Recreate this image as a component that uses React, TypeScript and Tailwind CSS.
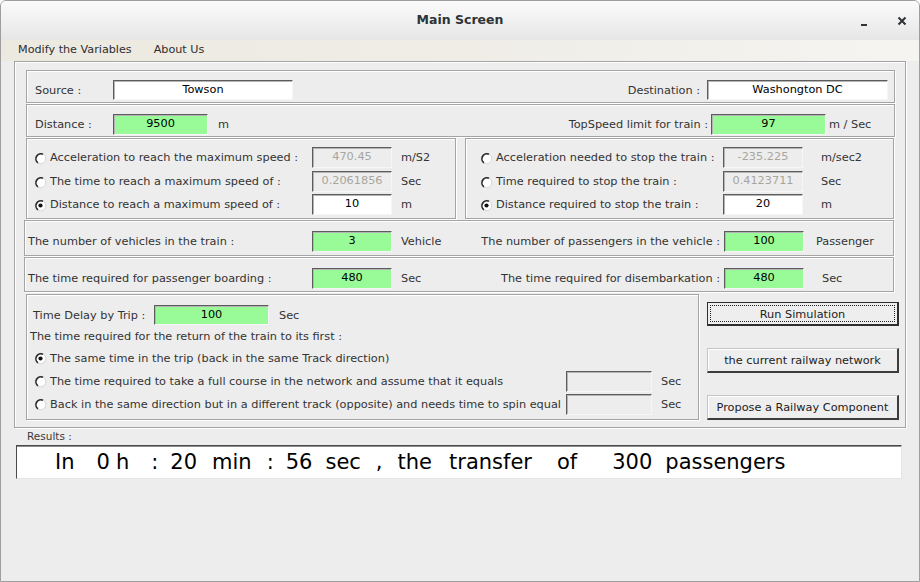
import React from "react";

// shared looks
const etched = "border border-[#a4a4a4] shadow-[inset_1px_1px_0_#ffffff,1px_1px_0_#ffffff]";
const lbl = "text-[11.3px] text-[#333333] whitespace-nowrap translate-y-[1px]";

function Field({
  value = "",
  w,
  h = "h-[21px]",
  kind = "white",
}: {
  value?: string;
  w: string;
  h?: string;
  kind?: "white" | "green" | "dim" | "empty";
}) {
  const look =
    kind === "green"
      ? "bg-[#98fb98] text-black"
      : kind === "dim"
      ? "bg-[#ededed] text-[#a8a59d]"
      : kind === "empty"
      ? "bg-[#ededed]"
      : "bg-white text-black";
  return (
    <div
      className={`${w} ${h} ${look} shrink-0 flex items-center justify-center text-[11.3px] border border-t-[#5c5c5c] border-l-[#5c5c5c] border-r-[#f6f6f6] border-b-[#f6f6f6] shadow-[inset_1px_1px_0_#b4b4b4]`}
    >
      {value}
    </div>
  );
}

function Radio({ checked }: { checked?: boolean }) {
  return (
    <svg width="13" height="13" viewBox="0 0 13 13" className="shrink-0">
      <circle cx="6.5" cy="6.5" r="5.3" fill="#ffffff" stroke="#d4d4d4" strokeWidth="1" />
      <path d="M9 2.2 A5 5 0 0 0 4 10.8" fill="none" stroke="#2a2a2a" strokeWidth="1.6" />
      {checked && <circle cx="6.5" cy="6.5" r="2.1" fill="#111111" />}
    </svg>
  );
}

function Button({ text, primary, h }: { text: string; primary?: boolean; h: string }) {
  if (primary) {
    return (
      <div className={`${h} w-[192px] p-[2px] border border-[#2e2e2e] border-r-2 border-b-2 bg-[#eeeeee]`}>
        <div className="h-full w-full border border-dotted border-[#222222] flex items-center justify-center pt-[3px] text-[11.3px] text-[#222222]">
          {text}
        </div>
      </div>
    );
  }
  return (
    <div
      className={`${h} w-[192px] flex items-center justify-center pt-[3px] bg-[#eeeeee] border border-t-[#c4c4c4] border-l-[#c4c4c4] border-r-2 border-b-2 border-r-[#3c3c3c] border-b-[#3c3c3c] shadow-[inset_1px_1px_0_#ffffff] text-[11.3px] text-[#222222]`}
    >
      {text}
    </div>
  );
}

function RadioRow({
  text,
  checked,
  col,
  value,
  unit,
  kind,
  unitGap,
}: {
  text: string;
  checked?: boolean;
  col: string;
  value: string;
  unit: string;
  kind: "white" | "dim";
  unitGap: string;
}) {
  return (
    <div className="flex items-center h-[21px]">
      <div className={`${col} flex items-center gap-[3px]`}>
        <div className="translate-y-[1px]">
          <Radio checked={checked} />
        </div>
        <span className={lbl}>{text}</span>
      </div>
      <Field w="w-[80px]" value={value} kind={kind} />
      <span className={`${lbl} ${unitGap}`}>{unit}</span>
    </div>
  );
}

const words: [string, string][] = [
  ["In", "ml-[38px]"],
  ["0", "ml-[22px]"],
  ["h", "ml-[6px]"],
  [":", "ml-[22px]"],
  ["20", "ml-[12px]"],
  ["min", "ml-[15px]"],
  [":", "ml-[15px]"],
  ["56", "ml-[12px]"],
  ["sec", "ml-[13px]"],
  [",", "ml-[15px]"],
  ["the", "ml-[15px]"],
  ["transfer", "ml-[17px]"],
  ["of", "ml-[25px]"],
  ["300", "ml-[35px]"],
  ["passengers", "ml-[13px]"],
];

export default function App() {
  return (
    <div className="w-[920px] h-[582px] flex flex-col bg-[#ededed] border border-[#9e9e9e] rounded-t-[6px] overflow-hidden font-['DejaVu_Sans',sans-serif]">
      {/* title bar */}
      <div className="h-[39px] shrink-0 grid grid-cols-[1fr_auto_1fr] items-center bg-gradient-to-b from-[#fbfbfb] to-[#e6e6e6]">
        <div />
        <div className="text-[12.5px] font-bold text-[#2e3436]">Main Screen</div>
        <div className="flex items-center justify-end pr-[12px] gap-[28px]">
          <svg width="10" height="10" viewBox="0 0 10 10" className="mt-[3px]">
            <rect x="2" y="7" width="6" height="2" fill="#2e3436" />
          </svg>
          <svg width="10" height="10" viewBox="0 0 10 10">
            <path d="M1.5 1.5 L8.5 8.5 M8.5 1.5 L1.5 8.5" stroke="#2e3436" strokeWidth="2" />
          </svg>
        </div>
      </div>

      {/* menu bar */}
      <div className="h-[21px] shrink-0 flex items-center pl-[6px] bg-gradient-to-r from-[#ece9e0] via-[#efede6] to-[#f5f4f1]">
        <span className="px-[11px] text-[11.2px] text-[#2e2e2e]">Modify the Variables</span>
        <span className="px-[11px] text-[11.2px] text-[#2e2e2e]">About Us</span>
      </div>

      {/* main panel */}
      <div className={`ml-[13px] w-[892px] h-[367px] shrink-0 ${etched} pt-[8px] pl-[11px] pr-[10px] pb-[7px] flex flex-col`}>
        {/* source / destination */}
        <div className={`h-[33px] shrink-0 ${etched} flex items-start pt-[9px] pl-[8px] pr-[6px]`}>
          <div className="flex items-center h-[20px]">
            <span className={`${lbl} w-[78px]`}>Source :</span>
            <Field w="w-[180px]" h="h-[20px]" value="Towson" />
          </div>
          <div className="flex-1" />
          <div className="flex items-center h-[20px]">
            <span className={lbl}>Destination :</span>
            <div className="ml-[7px]">
              <Field w="w-[181px]" h="h-[20px]" value="Washongton DC" />
            </div>
          </div>
        </div>

        {/* distance / top speed */}
        <div className={`mt-[1px] h-[33px] shrink-0 ${etched} flex items-start pt-[9px] pl-[8px] pr-[16px]`}>
          <div className="flex items-center h-[21px]">
            <span className={`${lbl} w-[78px]`}>Distance :</span>
            <Field w="w-[95px]" value="9500" kind="green" />
            <span className={`${lbl} ml-[10px]`}>m</span>
          </div>
          <div className="flex-1" />
          <div className="flex items-center h-[21px]">
            <span className={lbl}>TopSpeed limit for train :</span>
            <div className="ml-[3px]">
              <Field w="w-[115px]" value="97" kind="green" />
            </div>
            <span className={`${lbl} ml-[3px] w-[49px]`}>m / Sec</span>
          </div>
        </div>

        {/* acceleration / deceleration */}
        <div className="mt-[1px] h-[81px] shrink-0 flex">
          <div className={`w-[430px] ${etched} flex flex-col pl-[7px]`}>
            <div className="mt-[8px]">
              <RadioRow text="Acceleration to reach the maximum speed :" col="w-[278px]" value="470.45" unit="m/S2" kind="dim" unitGap="ml-[9px]" />
            </div>
            <div className="mt-[3px]">
              <RadioRow text="The time to reach a maximum speed of :" col="w-[278px]" value="0.2061856" unit="Sec" kind="dim" unitGap="ml-[9px]" />
            </div>
            <div className="mt-[2px]">
              <RadioRow text="Distance to reach a maximum speed of :" checked col="w-[278px]" value="10" unit="m" kind="white" unitGap="ml-[9px]" />
            </div>
          </div>
          <div className={`ml-[9px] w-[429px] ${etched} flex flex-col pl-[14px]`}>
            <div className="mt-[8px]">
              <RadioRow text="Acceleration needed to stop the train :" col="w-[243px]" value="-235.225" unit="m/sec2" kind="dim" unitGap="ml-[18px]" />
            </div>
            <div className="mt-[3px]">
              <RadioRow text="Time required to stop the train :" col="w-[243px]" value="0.4123711" unit="Sec" kind="dim" unitGap="ml-[18px]" />
            </div>
            <div className="mt-[2px]">
              <RadioRow text="Distance required to stop the train :" checked col="w-[243px]" value="20" unit="m" kind="white" unitGap="ml-[18px]" />
            </div>
          </div>
        </div>

        {/* vehicles / passengers */}
        <div className={`mt-[1px] -ml-[2px] w-[870px] h-[36px] shrink-0 ${etched} flex items-start pt-[10px] pl-[3px]`}>
          <div className="flex items-center h-[21px]">
            <span className={`${lbl} w-[284px]`}>The number of vehicles in the train :</span>
            <Field w="w-[80px]" value="3" kind="green" />
            <span className={`${lbl} ml-[9px]`}>Vehicle</span>
          </div>
          <div className="flex-1" />
          <div className="flex items-center h-[21px]">
            <span className={lbl}>The number of passengers in the vehicle :</span>
            <div className="ml-[4px]">
              <Field w="w-[80px]" value="100" kind="green" />
            </div>
            <span className={`${lbl} ml-[12px] w-[77px]`}>Passenger</span>
          </div>
        </div>

        {/* boarding / disembarkation */}
        <div className={`mt-[1px] -ml-[2px] w-[870px] h-[35px] shrink-0 ${etched} flex items-start pt-[10px] pl-[3px]`}>
          <div className="flex items-center h-[21px]">
            <span className={`${lbl} w-[284px]`}>The time required for passenger boarding :</span>
            <Field w="w-[80px]" value="480" kind="green" />
            <span className={`${lbl} ml-[9px]`}>Sec</span>
          </div>
          <div className="flex-1" />
          <div className="flex items-center h-[21px]">
            <span className={lbl}>The time required for disembarkation :</span>
            <div className="ml-[4px]">
              <Field w="w-[80px]" value="480" kind="green" />
            </div>
            <span className={`${lbl} ml-[18px] w-[71px]`}>Sec</span>
          </div>
        </div>

        {/* return options + buttons */}
        <div className="mt-[2px] w-[873px] h-[126px] shrink-0 flex">
          <div className={`w-[673px] ${etched} flex flex-col`}>
            <div className="mt-[10px] h-[20px] flex items-center pl-[6px]">
              <span className={`${lbl} w-[121px]`}>Time Delay by Trip :</span>
              <Field w="w-[115px]" h="h-[20px]" value="100" kind="green" />
              <span className={`${lbl} ml-[10px]`}>Sec</span>
            </div>
            <div className="h-[22px] flex items-center pl-[3px]">
              <span className={lbl}>The time required for the return of the train to its first :</span>
            </div>
            <div className="h-[23px] flex items-center pl-[7px] gap-[3px]">
              <Radio checked />
              <span className={lbl}>The same time in the trip (back in the same Track direction)</span>
            </div>
            <div className="h-[23px] flex items-center pl-[7px]">
              <div className="w-[532px] flex items-center gap-[3px]">
                <Radio />
                <span className={lbl}>The time required to take a full course in the network and assume that it equals</span>
              </div>
              <Field w="w-[86px]" kind="empty" />
              <span className={`${lbl} ml-[9px]`}>Sec</span>
            </div>
            <div className="h-[23px] flex items-center pl-[7px]">
              <div className="w-[532px] flex items-center gap-[3px] overflow-hidden">
                <Radio />
                <span className={lbl}>Back in the same direction but in a different track (opposite) and needs time to spin equal</span>
              </div>
              <Field w="w-[86px]" kind="empty" />
              <span className={`${lbl} ml-[9px]`}>Sec</span>
            </div>
          </div>
          <div className="ml-[8px] pt-[8px] flex flex-col">
            <Button text="Run Simulation" primary h="h-[24px]" />
            <div className="mt-[22px]">
              <Button text="the current railway network" h="h-[25px]" />
            </div>
            <div className="mt-[22px]">
              <Button text="Propose a Railway Component" h="h-[25px]" />
            </div>
          </div>
        </div>
      </div>

      {/* results */}
      <div className="h-[17px] shrink-0 flex items-center pl-[26px]">
        <span className="text-[10.5px] text-[#3a3a3a]">Results :</span>
      </div>
      <div className="ml-[15px] w-[886px] h-[34px] shrink-0 bg-white flex items-center border border-t-[#4a4a4a] border-l-[#4a4a4a] border-r-[#e4e4e4] border-b-[#e4e4e4] shadow-[inset_0_1px_0_#8c8c8c] text-[21px] text-black">
        {words.map(([w, m], i) => (
          <span key={i} className={`${m} whitespace-pre leading-none`}>
            {w}
          </span>
        ))}
      </div>
    </div>
  );
}
